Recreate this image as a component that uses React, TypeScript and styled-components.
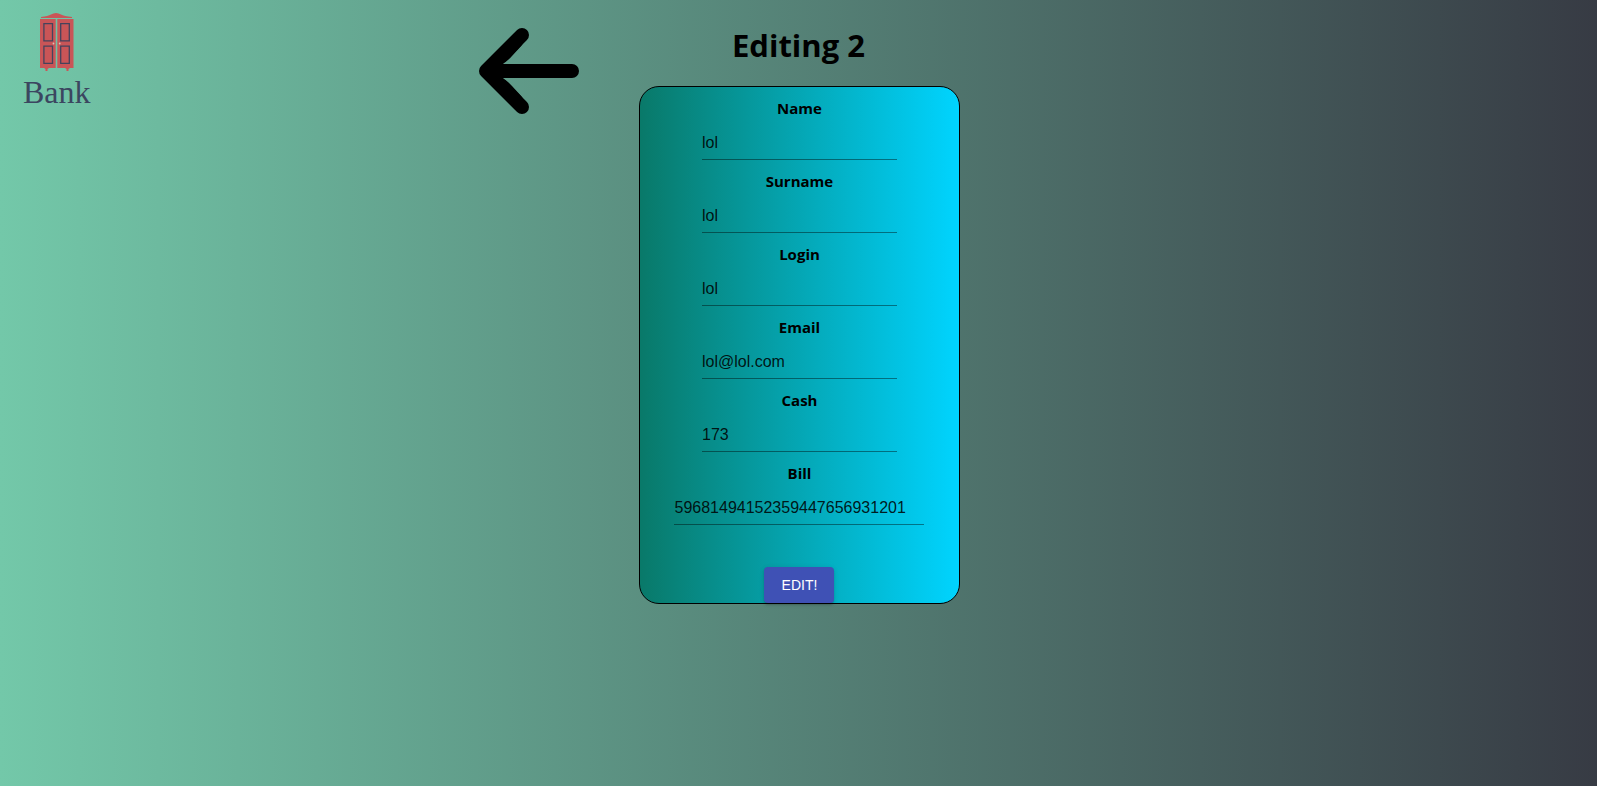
import React, { useState } from "react";
import styled, { createGlobalStyle } from "styled-components";

const GlobalStyle = createGlobalStyle`
  body {
    margin: 0;
    min-height: 100vh;
    background: linear-gradient(to right, #73c8a9, #373b44);
    font-family: "Open Sans", "Noto Sans", sans-serif;
    color: #000;
  }
`;

const Page = styled.div`
  display: grid;
  grid-template-columns: 30fr 10fr 20fr 40fr;
  align-items: start;
`;

const LogoLink = styled.a`
  display: inline-flex;
  flex-direction: column;
  align-items: center;
  justify-self: start;
  padding: 12px 0 0 23px;
  color: #3b4660;
  text-decoration: none;
`;

const LogoName = styled.span`
  font-family: "Liberation Serif", serif;
  font-size: 32px;
  line-height: 36px;
`;

const BackLink = styled.a`
  display: block;
  justify-self: start;
  padding-top: 21px;
  color: #000;

  svg {
    display: block;
  }
`;

const Editor = styled.main`
  text-align: center;
`;

const Title = styled.h1`
  margin: 0;
  padding: 24px 0 20px;
  font-size: 31px;
  line-height: 42px;
`;

const Card = styled.form`
  display: flex;
  flex-direction: column;
  align-items: center;
  width: 100%;
  border: 1px solid #000;
  border-radius: 20px;
  background: linear-gradient(90deg, #097969 0%, #00d4ff 100%);
`;

const Field = styled.div`
  display: flex;
  flex-direction: column;
  align-items: center;
  gap: 9px;
  padding-top: 11px;
`;

const Label = styled.label`
  font-size: 15px;
  font-weight: 700;
  line-height: 21px;
`;

const TextInput = styled.input<{ $wide?: boolean }>`
  box-sizing: border-box;
  width: ${({ $wide }) => ($wide ? 250 : 195)}px;
  height: 32px;
  padding: 0 0 1px;
  border: 0;
  border-bottom: 1px solid rgba(0, 0, 0, 0.42);
  outline: 0;
  background: none;
  color: rgba(0, 0, 0, 0.87);
  font-family: "Liberation Sans", Arial, sans-serif;
  font-size: 16px;

  &:focus {
    border-bottom-color: #000;
  }
`;

const SubmitButton = styled.button`
  min-width: 70px;
  height: 36px;
  margin-top: 42px;
  padding: 0 16px;
  border: 0;
  border-radius: 4px;
  background: #3f51b5;
  box-shadow:
    0 3px 1px -2px rgba(0, 0, 0, 0.2),
    0 2px 2px 0 rgba(0, 0, 0, 0.14),
    0 1px 5px 0 rgba(0, 0, 0, 0.12);
  color: #fff;
  font-family: "Liberation Sans", Arial, sans-serif;
  font-size: 14px;
  text-transform: uppercase;
  cursor: pointer;
`;

const Wardrobe = () => (
  <svg width="36" height="62" viewBox="39 12 36 62" aria-hidden="true">
    <g fill="#c95557">
      <path d="M41 18v-1q7-.6 10-2.500q5-3 10 0q3 1.900 11 2.500v1z" />
      <path d="M40 19h15.700v49H40zM57.300 19h16.200v49H57.300z" />
      <path d="M44 68h5l-1.500 1v2h-2v-2zM65 68h5l-1.500 1v2h-2v-2z" />
    </g>
    <g fill="none" stroke="#45435c" strokeWidth="1.300">
      <path d="M43.900 23.600h8.600v17.200h-8.600zM43.900 46.200h8.600v17.200h-8.600z" />
      <path d="M60.700 23.600h8.600v17.200h-8.600zM60.700 46.200h8.600v17.200h-8.600z" />
    </g>
    <circle cx="53.500" cy="43.500" r="0.900" fill="#d9c3b4" />
    <circle cx="59.700" cy="43.500" r="0.900" fill="#d9c3b4" />
  </svg>
);

const BackArrow = () => (
  <svg width="100" height="100" viewBox="0 0 100 100" aria-hidden="true">
    <path
      d="M43 14L7 50l36 36M7 50h86"
      fill="none"
      stroke="currentColor"
      strokeWidth="14"
      strokeLinecap="round"
      strokeLinejoin="round"
    />
    <path
      d="M44 23L33 35Q28 41 22 43.500L20 40zM44 77L33 65Q28 59 22 56.500L20 60z"
      fill="currentColor"
    />
  </svg>
);

const initialClient = {
  name: "lol",
  surname: "lol",
  login: "lol",
  email: "lol@lol.com",
  cash: "173",
  bill: "59681494152359447656931201",
};

type ClientKey = keyof typeof initialClient;

const fields: { key: ClientKey; label: string; wide?: boolean }[] = [
  { key: "name", label: "Name" },
  { key: "surname", label: "Surname" },
  { key: "login", label: "Login" },
  { key: "email", label: "Email" },
  { key: "cash", label: "Cash" },
  { key: "bill", label: "Bill", wide: true },
];

export default function App() {
  const [client, setClient] = useState(initialClient);

  return (
    <>
      <GlobalStyle />
      <Page>
        <LogoLink href="#home">
          <Wardrobe />
          <LogoName>Bank</LogoName>
        </LogoLink>
        <BackLink href="#clients" aria-label="Back">
          <BackArrow />
        </BackLink>
        <Editor>
          <Title>Editing 2</Title>
          <Card onSubmit={(event) => event.preventDefault()}>
            {fields.map(({ key, label, wide }) => (
              <Field key={key}>
                <Label htmlFor={key}>{label}</Label>
                <TextInput
                  id={key}
                  $wide={wide}
                  value={client[key]}
                  onChange={(event) => setClient({ ...client, [key]: event.target.value })}
                />
              </Field>
            ))}
            <SubmitButton type="submit">Edit!</SubmitButton>
          </Card>
        </Editor>
      </Page>
    </>
  );
}
